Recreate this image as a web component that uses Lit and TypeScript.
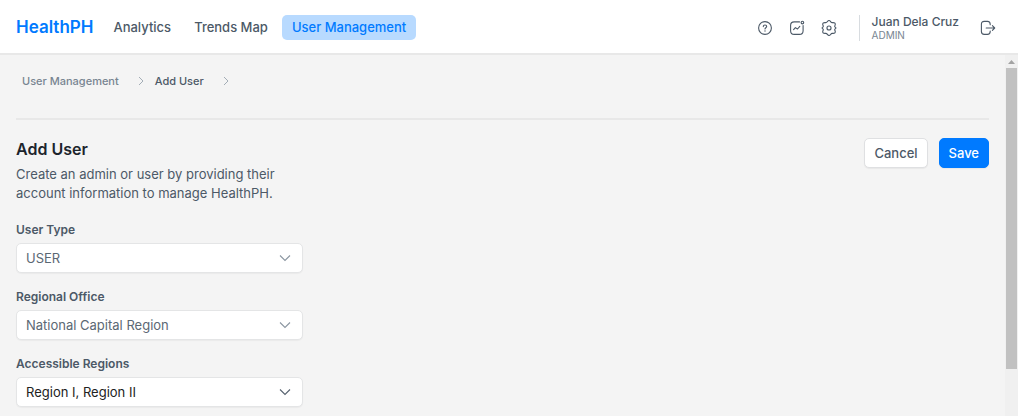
import { LitElement, html, css, svg } from "lit";
import { customElement, property } from "lit/decorators.js";

const chevronRight = html`<svg class="crumb-arrow" width="8" height="10" viewBox="0 0 8 10" aria-hidden="true">
  <path d="M2 1l4 4-4 4" fill="none" stroke="currentColor" />
</svg>`;

const icon = (body: unknown) => html`<svg width="16" height="16" viewBox="0 0 16 16" fill="none"
  stroke="currentColor" stroke-width="1.1" stroke-linecap="round" stroke-linejoin="round" aria-hidden="true">${body}</svg>`;

const helpIcon = icon(svg`<circle cx="8" cy="8" r="6.4" />
  <path d="M6.3 6.6c0-1 .7-1.6 1.7-1.6s1.7.6 1.7 1.5c0 1.2-1.7 1.3-1.7 2.5" />
  <path d="M8 10.8v.2" stroke-width="1.3" />`);

const chartIcon = icon(svg`<path d="M10.5 1.9H5.2C2.6 1.9 1.6 2.9 1.6 5.5v5.2c0 2.6 1 3.7 3.6 3.7h5.2c2.6 0 3.7-1.1 3.7-3.7V5.6" />
  <path d="M4.6 9.7l1.8-2.1 2.1 1.4 2.3-2.7" />
  <circle cx="13.4" cy="2.6" r="1.3" />`);

const gearIcon = icon(svg`<g transform="translate(-1 -1) scale(1.125)" stroke-width="1"><circle cx="8" cy="8" r="1.8" />
  <path d="M6.4 2.5Q8 .2 9.6 2.5Q10.2 3.4 11.2 3.2Q14.2 3 13.4 5.6Q12.8 6.5 13.3 7.1Q15 8 13.3 8.9Q12.8 9.5 13.4 10.4Q14.2 13 11.2 12.8Q10.2 12.6 9.6 13.5Q8 15.8 6.4 13.5Q5.8 12.6 4.8 12.8Q1.8 13 2.6 10.4Q3.2 9.5 2.7 8.9Q1 8 2.7 7.1Q3.2 6.5 2.6 5.6Q1.8 3 4.8 3.2Q5.8 3.4 6.4 2.5Z" /></g>`);

const logoutIcon = icon(svg`<path d="M10.2 4.7V4.2c0-1.9-.8-2.8-2.7-2.8H4.2C2.3 1.4 1.4 2.3 1.4 4.2v7.4c0 1.9.9 2.8 2.8 2.8h3.3c1.9 0 2.7-.9 2.7-2.8v-.5" />
  <path d="M6.2 8h8.4M12.4 5.7L14.7 8l-2.3 2.3" />`);

@customElement("select-field")
export class SelectField extends LitElement {
  @property() label = "";
  @property() value = "";
  @property({ type: Boolean }) muted = false;

  static styles = css`
    :host {
      display: flex;
      flex-direction: column;
      gap: 3px;
    }
    .label {
      font-size: 12px;
      line-height: 20px;
      font-weight: 600;
      color: #4c5967;
    }
    .box {
      display: grid;
      align-items: center;
      color: #222;
    }
    .box.muted {
      color: #5b6874;
    }
    .select {
      grid-area: 1 / 1;
      appearance: none;
      width: 100%;
      height: 30px;
      margin: 0;
      padding: 0 32px 0 9px;
      border: 1px solid #e4e5e6;
      border-radius: 5px;
      background: #fff;
      box-shadow: 0 1px 1px #0000000a;
      font: 13px/20px Inter, sans-serif;
      color: inherit;
    }
    .arrow {
      grid-area: 1 / 1;
      justify-self: end;
      margin-right: 12px;
      pointer-events: none;
      color: #56626f;
    }
    .muted .arrow {
      color: #8b96a1;
    }
  `;

  render() {
    return html`
      <label class="label" for="control">${this.label}</label>
      <div class="box ${this.muted ? "muted" : ""}">
        <select class="select" id="control">
          <option>${this.value}</option>
        </select>
        <svg class="arrow" width="12" height="8" viewBox="0 0 12 8" aria-hidden="true">
          <path d="M1 1.5l5 5 5-5" fill="none" stroke="currentColor" stroke-width="1.1" />
        </svg>
      </div>
    `;
  }
}

@customElement("app-root")
export class AppRoot extends LitElement {
  static styles = css`
    :host {
      display: flex;
      flex-direction: column;
      height: 100vh;
      overflow: hidden;
      box-sizing: border-box;
      background: #f4f4f4;
      font-family: Inter, sans-serif;
      color: #4c5967;
    }
    a {
      color: inherit;
      text-decoration: none;
    }
    button {
      font-family: inherit;
      cursor: pointer;
    }
    svg {
      display: block;
    }
    .topbar {
      display: flex;
      flex: none;
      align-items: center;
      justify-content: space-between;
      padding: 14px 22px 12px 16px;
      border-bottom: 2px solid #e8e8e8;
      background: #fff;
    }
    .menu,
    .tools {
      display: flex;
      align-items: center;
    }
    .brand {
      margin-right: 11px;
      font-size: 17px;
      line-height: 27px;
      font-weight: 600;
      color: #007aff;
    }
    .nav {
      display: flex;
      gap: 5px;
    }
    .nav-link {
      padding: 0 9px;
      border-radius: 5px;
      font-size: 13px;
      line-height: 25px;
      font-weight: 500;
    }
    .nav-link.active {
      padding: 0 10px;
      background: #b8daff;
      color: #007aff;
    }
    .icons {
      display: flex;
      gap: 16px;
      margin-right: 22px;
    }
    .icon-button {
      padding: 0;
      border: 0;
      background: none;
      color: #4c5967;
    }
    .account {
      display: flex;
      flex-direction: column;
      justify-content: center;
      height: 26px;
      margin-right: 21px;
      padding-left: 12px;
      border-left: 1px solid #d8dce0;
    }
    .name {
      font-size: 12px;
      line-height: 15px;
      font-weight: 500;
    }
    .role {
      font-size: 10px;
      line-height: 13px;
      color: #788591;
    }
    .body {
      display: flex;
      flex: 1;
      min-height: 0;
    }
    .page {
      flex: 1;
      padding: 16px 16px 0;
    }
    .crumbs {
      display: flex;
      align-items: center;
      padding: 0 6px 27px;
      border-bottom: 2px solid #e8e8e8;
      font-size: 11px;
      line-height: 20px;
      font-weight: 500;
      color: #788591;
    }
    .crumb-arrow {
      margin: 0 10px 0 18px;
      color: #a3adb6;
    }
    .current {
      color: #4c5967;
    }
    .heading {
      display: flex;
      align-items: flex-start;
      justify-content: space-between;
      padding-top: 18px;
    }
    .title {
      margin: 0 0 5px;
      font-size: 16px;
      line-height: 22px;
      font-weight: 600;
      color: #1c242c;
    }
    .lead {
      margin: 0;
      max-width: 288px;
      font-size: 13px;
      line-height: 19px;
    }
    .actions {
      display: flex;
      gap: 11px;
    }
    .button {
      height: 30px;
      padding: 0 9px;
      border: 1px solid #dfe0e2;
      border-radius: 5px;
      background: #fff;
      box-shadow: 0 1px 1px #0000000d;
      font-size: 13px;
      line-height: 20px;
      font-weight: 500;
      color: #4c5967;
    }
    .button.primary {
      border-color: #007aff;
      background: #007aff;
      color: #fff;
    }
    .form {
      display: flex;
      flex-direction: column;
      gap: 14px;
      max-width: 287px;
      padding-top: 17px;
    }
    .scrollbar {
      display: flex;
      flex-direction: column;
      flex: none;
      align-items: center;
      width: 13px;
      background: #f0f0f0;
    }
    .scroll-up {
      display: grid;
      place-items: center;
      height: 13px;
      color: #a3a3a3;
    }
    .thumb {
      width: 11px;
      background: #c1c1c1;
    }
  `;

  private thumbShare = 83.4;

  render() {
    return html`
      <header class="topbar">
        <div class="menu">
          <a class="brand" href="#">HealthPH</a>
          <nav class="nav">
            <a class="nav-link" href="#analytics">Analytics</a>
            <a class="nav-link" href="#trends">Trends Map</a>
            <a class="nav-link active" href="#users">User Management</a>
          </nav>
        </div>
        <div class="tools">
          <div class="icons">
            <button class="icon-button" aria-label="Help">${helpIcon}</button>
            <button class="icon-button" aria-label="Activity">${chartIcon}</button>
            <button class="icon-button" aria-label="Settings">${gearIcon}</button>
          </div>
          <div class="account">
            <span class="name">Juan Dela Cruz</span>
            <span class="role">ADMIN</span>
          </div>
          <button class="icon-button" aria-label="Log out">${logoutIcon}</button>
        </div>
      </header>
      <div class="body">
        <main class="page">
          <nav class="crumbs" aria-label="Breadcrumb">
            <a href="#users">User Management</a>${chevronRight}
            <span class="current">Add User</span>${chevronRight}
          </nav>
          <div class="heading">
            <div>
              <h1 class="title">Add User</h1>
              <p class="lead">Create an admin or user by providing their account information to manage HealthPH.</p>
            </div>
            <div class="actions">
              <button class="button">Cancel</button>
              <button class="button primary">Save</button>
            </div>
          </div>
          <form class="form">
            <select-field label="User Type" value="USER" muted></select-field>
            <select-field label="Regional Office" value="National Capital Region" muted></select-field>
            <select-field label="Accessible Regions" value="Region I, Region II"></select-field>
          </form>
        </main>
        <div class="scrollbar" aria-hidden="true">
          <div class="scroll-up">
            <svg width="7" height="4" viewBox="0 0 7 4"><path d="M0 4L3.5 0 7 4z" fill="currentColor" /></svg>
          </div>
          <div class="thumb" style="height: ${this.thumbShare}%"></div>
        </div>
      </div>
    `;
  }
}
